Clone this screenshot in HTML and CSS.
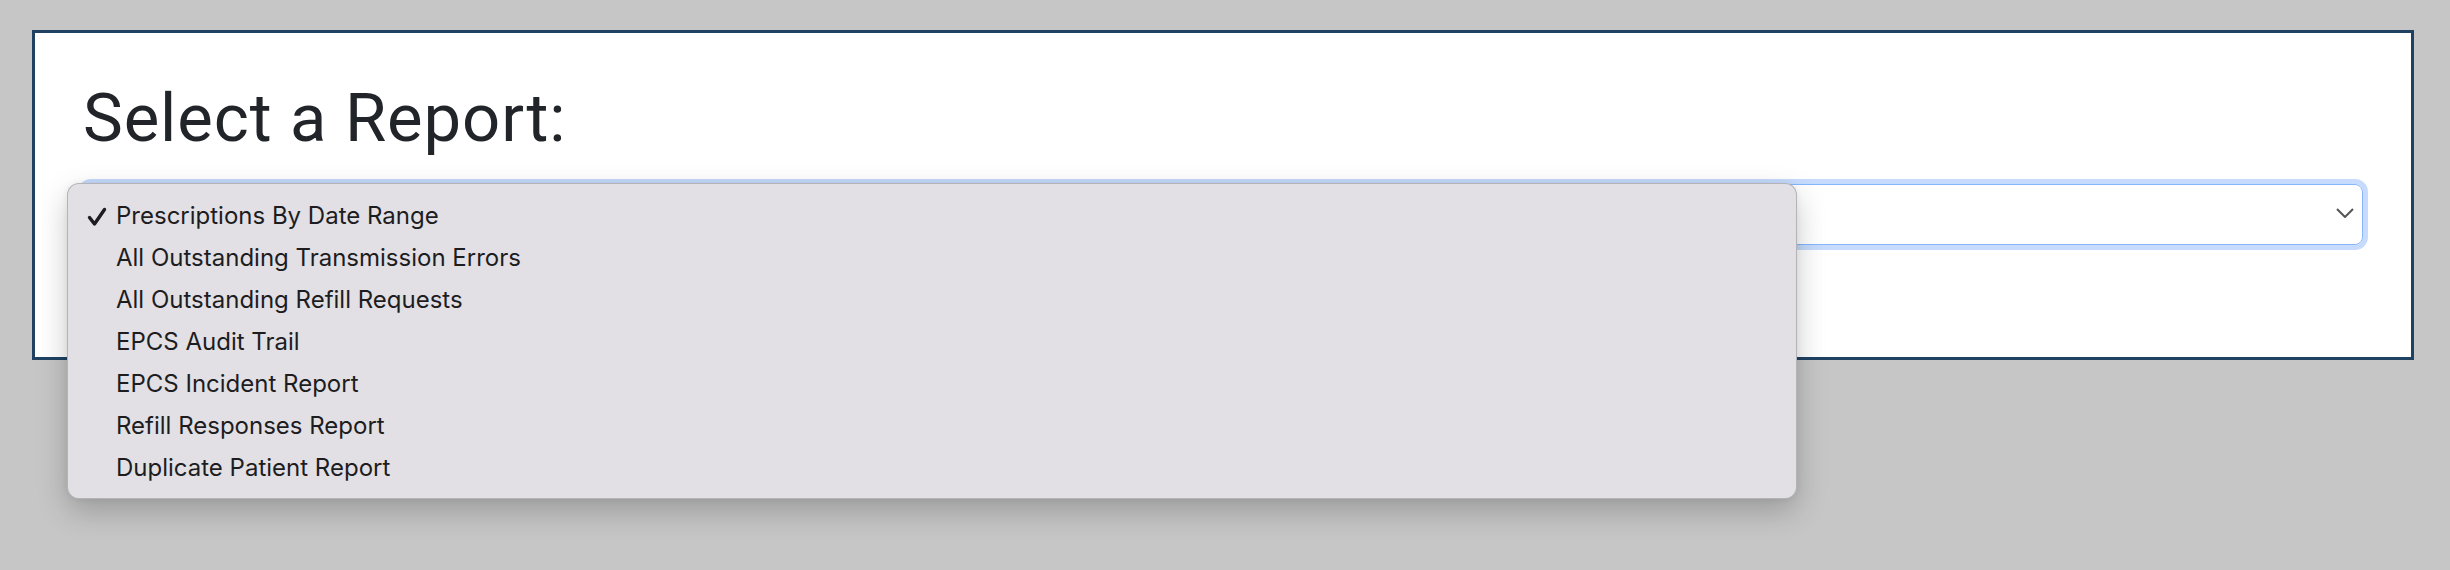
FILE: index.html
```html
<!DOCTYPE html>
<html lang="en">
<head>
<meta charset="utf-8">
<title>Select a Report</title>
<link rel="stylesheet" href="styles.css">
</head>
<body>
<div class="page">
  <div class="panel">
    <h1 class="title">Select a Report:</h1>
    <div class="select-wrap">
      <div class="select">
        <svg class="chevron" width="18" height="10" viewBox="0 0 18 10"><path d="M1 1 L9 9 L17 1" fill="none" stroke="#555" stroke-width="2"/></svg>
      </div>
      <ul class="menu">
        <li class="item selected"><svg class="check" width="20" height="20" viewBox="0 0 20 20"><path d="M2.5 10.5 L7.5 17 L17.5 2.5" fill="none" stroke="#1d1d1f" stroke-width="3.4" stroke-linecap="round" stroke-linejoin="round"/></svg>Prescriptions By Date Range</li>
        <li class="item">All Outstanding Transmission Errors</li>
        <li class="item">All Outstanding Refill Requests</li>
        <li class="item">EPCS Audit Trail</li>
        <li class="item">EPCS Incident Report</li>
        <li class="item">Refill Responses Report</li>
        <li class="item">Duplicate Patient Report</li>
      </ul>
    </div>
  </div>
</div>
</body>
</html>
```
FILE: styles.css
```css
html, body {
  margin: 0;
  background: #c6c6c6;
}
.page {
  min-height: 570px;
  box-sizing: border-box;
  padding: 30px 36px 0 32px;
  font-family: Roboto, "Liberation Sans", sans-serif;
}
.panel {
  background: #fff;
  border: 3px solid #1f4263;
  padding: 45px 48px 112px;
}
.title {
  margin: 0 0 26px;
  font-family: Roboto, sans-serif;
  font-weight: 400;
  font-size: 67px;
  line-height: 80px;
  color: #212529;
  letter-spacing: 0.9px;
}
.select-wrap {
  position: relative;
}
.select {
  height: 59px;
  border: 1px solid #86b7fe;
  border-radius: 8px;
  box-shadow: 0 0 0 5px #c6dbfd;
  display: flex;
  align-items: center;
  justify-content: flex-end;
  padding-right: 8px;
}
.chevron {
  display: block;
  margin-top: -4px;
}
.menu {
  position: absolute;
  left: -16px;
  top: -1px;
  width: 1728px;
  margin: 0;
  padding: 11px 0 9px;
  list-style: none;
  background: #e2e0e5;
  border: 1px solid rgba(0, 0, 0, 0.2);
  border-radius: 12px;
  box-shadow: 0 12px 30px rgba(0, 0, 0, 0.22), 0 0 6px rgba(0, 0, 0, 0.06);
  font-family: Inter, "Noto Sans", sans-serif;
  font-size: 24px;
  color: #1d1d1f;
  z-index: 5;
}
.item {
  position: relative;
  height: 42px;
  line-height: 42px;
  padding-left: 48px;
  white-space: nowrap;
}
.check {
  position: absolute;
  left: 19px;
  top: 12px;
}
```
